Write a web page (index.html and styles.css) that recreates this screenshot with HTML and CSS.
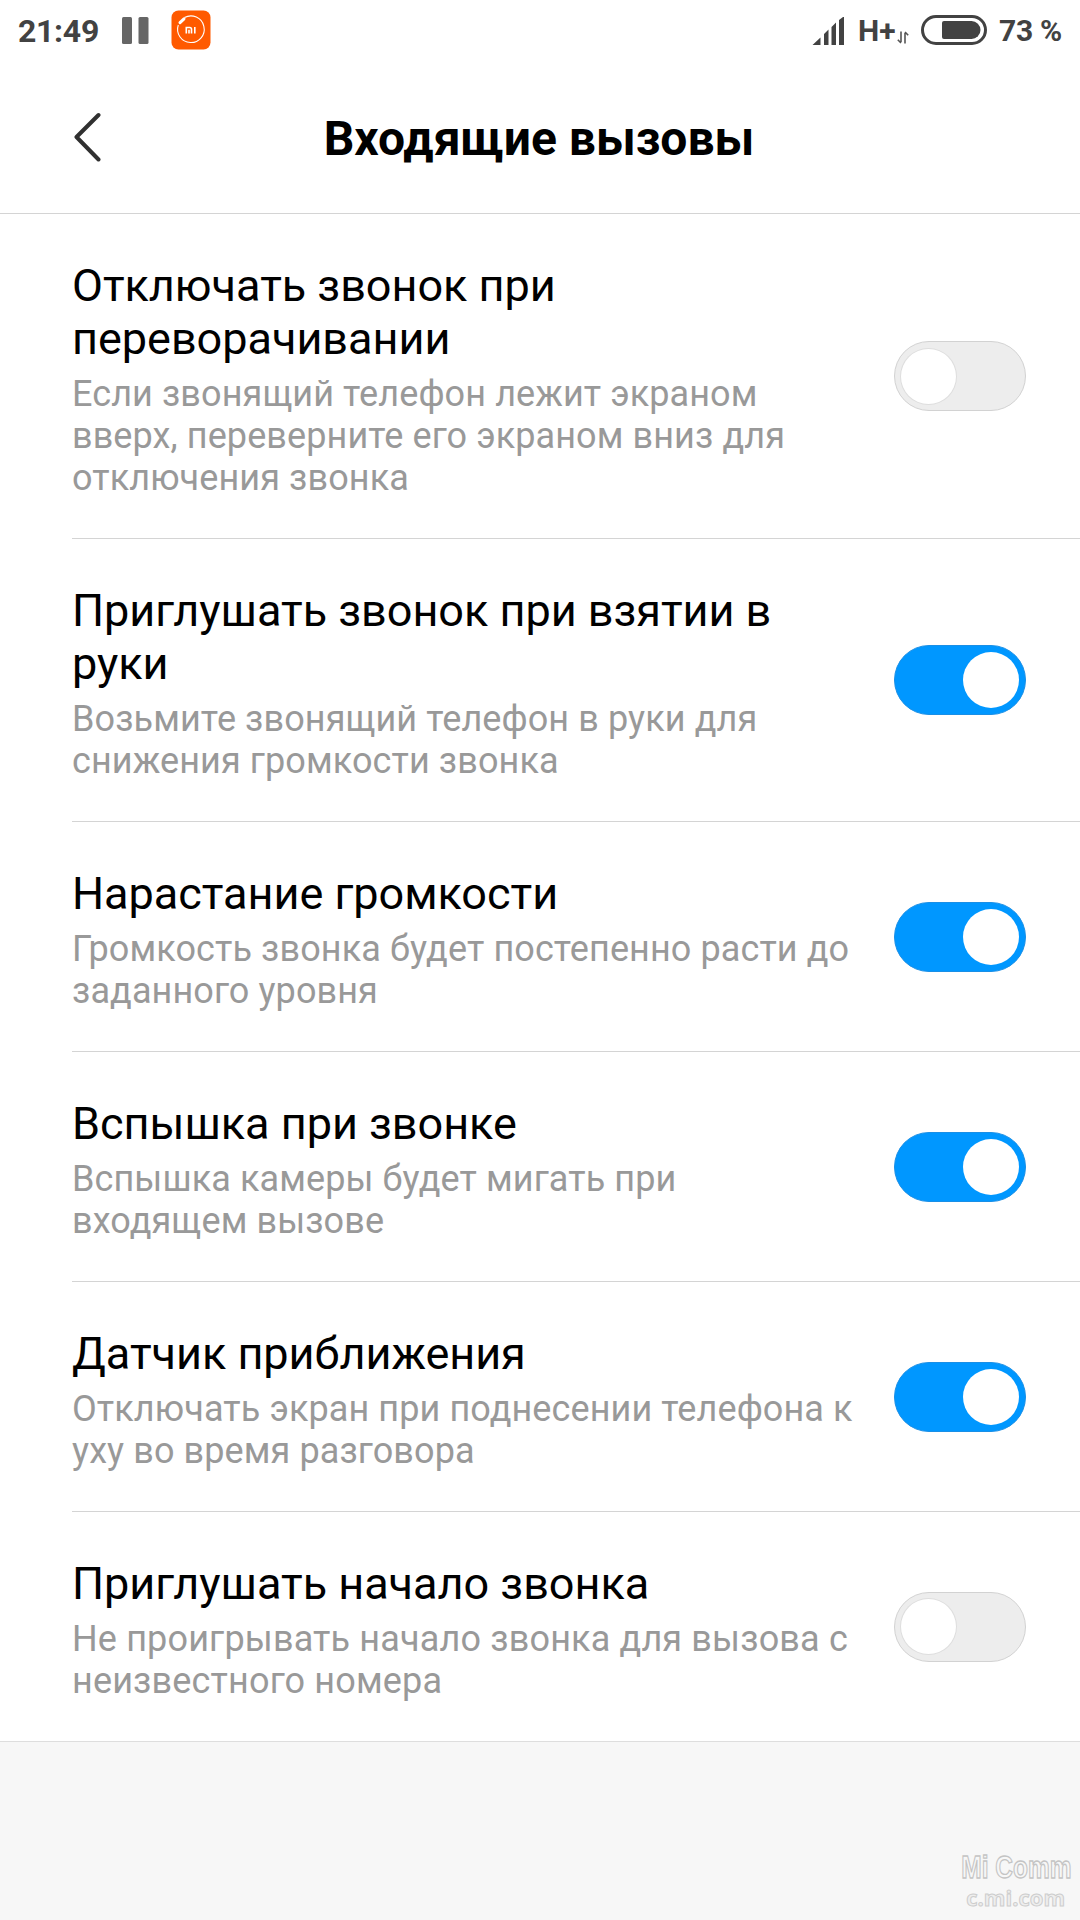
FILE: index.html
```html
<!DOCTYPE html>
<html lang="ru">
<head>
<meta charset="utf-8">
<title>Входящие вызовы</title>
<link rel="stylesheet" href="styles.css">
</head>
<body>
<div class="screen">
  <div class="status">
    <span class="clock">21:49</span>
    <svg class="pause" width="27" height="27" viewBox="0 0 27 27"><rect width="10" height="27" rx="1.5"/><rect x="16.500" width="10" height="27" rx="1.500"/></svg>
    <svg class="app" width="40" height="40" viewBox="0 0 40 40">
      <rect x=".5" y=".5" width="39" height="39" rx="7" fill="#ff5a00"/>
      <path d="M13.500 7.600A13.300 13.300 0 1 1 7.300 15" fill="none" stroke="#fff" stroke-width="1.100"/>
      <path d="M9 12.600l4-3.800" stroke="#fff" stroke-width="3" stroke-linecap="round"/>
      <path d="M15.300 23.500v-6h3.500q1.700 0 1.700 1.700v4.300M18 23.500v-3.800M23.800 17v6.500" fill="none" stroke="#fff" stroke-width="1.600"/>
    </svg>
    <svg class="signal" width="33" height="29" viewBox="0 0 33 29"><path d="M.500 28 8.500 20.500V28zM12 28V17l4.500-4.500V28zM19.500 28V10L24 5.500V28zM27 28V3l4-3h1v28z"/></svg>
    <span class="network">H+</span>
    <svg class="arrows" width="12" height="13" viewBox="0 0 12 13"><path d="M4 .5V11M4 12 .8 8.800M8 12.500V2M8 1l3.200 3.200"/></svg>
    <svg class="battery" width="66" height="30" viewBox="0 0 66 30"><rect x="1.500" y="1.500" width="63" height="27" rx="13.500" fill="none" stroke="#424242" stroke-width="3"/><path d="M23 6H50.500a9 9 0 0 1 0 18H23q-2 0-2-2V8q0-2 2-2z" fill="#424242"/></svg>
    <span class="percent">73 %</span>
  </div>

  <header class="header">
    <svg class="back" width="28" height="50" viewBox="0 0 28 50"><path d="M25.500 3 3.500 25l22 22.500"/></svg>
    <h1 class="heading">Входящие вызовы</h1>
  </header>

  <main class="list">
    <section class="item">
      <div class="copy"><h2 class="title">Отключать звонок при<br>переворачивании</h2><p class="desc">Если звонящий телефон лежит экраном<br>вверх, переверните его экраном вниз для<br>отключения звонка</p></div>
      <span class="toggle"><span class="knob"></span></span>
    </section>
    <section class="item">
      <div class="copy"><h2 class="title">Приглушать звонок при взятии в<br>руки</h2><p class="desc">Возьмите звонящий телефон в руки для<br>снижения громкости звонка</p></div>
      <span class="toggle on"><span class="knob"></span></span>
    </section>
    <section class="item">
      <div class="copy"><h2 class="title">Нарастание громкости</h2><p class="desc">Громкость звонка будет постепенно расти до<br>заданного уровня</p></div>
      <span class="toggle on"><span class="knob"></span></span>
    </section>
    <section class="item">
      <div class="copy"><h2 class="title">Вспышка при звонке</h2><p class="desc">Вспышка камеры будет мигать при<br>входящем вызове</p></div>
      <span class="toggle on"><span class="knob"></span></span>
    </section>
    <section class="item">
      <div class="copy"><h2 class="title">Датчик приближения</h2><p class="desc">Отключать экран при поднесении телефона к<br>уху во время разговора</p></div>
      <span class="toggle on"><span class="knob"></span></span>
    </section>
    <section class="item">
      <div class="copy"><h2 class="title">Приглушать начало звонка</h2><p class="desc">Не проигрывать начало звонка для вызова с<br>неизвестного номера</p></div>
      <span class="toggle"><span class="knob"></span></span>
    </section>
  </main>

  <footer class="footer">
    <span class="mark-name">Mi Comm</span>
    <span class="mark-site">c.mi.com</span>
  </footer>
</div>
</body>
</html>
```
FILE: styles.css
```css
* { box-sizing: border-box; }
body { margin: 0; background: #fff; font-family: Roboto, sans-serif; }
h1, h2, p { margin: 0; font-weight: 400; }
svg { display: block; flex: none; }

.screen { width: 1080px; height: 1920px; display: flex; flex-direction: column; overflow: hidden; }

.status { height: 60px; display: flex; align-items: center; padding: 0 18px; color: #424242; font-weight: 700; white-space: nowrap; }
.clock { width: 104px; font-size: 32px; line-height: 38px; padding-top: 1px; letter-spacing: -0.3px; }
.pause { fill: #666; }
.app { margin-left: 22px; }
.signal { margin: 2px 13px 0 auto; fill: #424242; }
.network { width: 39px; font-size: 30px; line-height: 36px; padding-top: 1px; }
.arrows { margin-top: 15px; fill: none; stroke: #555; stroke-width: 1.6; }
.battery { margin-left: 12px; }
.percent { width: 63px; margin-left: 12px; font-size: 30px; line-height: 36px; padding-top: 1px; letter-spacing: -0.3px; }

.header { height: 154px; display: grid; grid-template-columns: 28px 1fr 28px; align-items: center; padding: 4px 75px 0 73px; border-bottom: 1px solid #d4d4d4; }
.back { margin-bottom: 4px; fill: none; stroke: #303030; stroke-width: 4; stroke-linecap: round; stroke-linejoin: round; }
.heading { font-size: 48px; line-height: 56px; font-weight: 700; text-align: center; color: #000; }

.item { display: flex; align-items: center; justify-content: space-between; margin-left: 72px; padding-right: 54px; border-bottom: 1px solid #d4d4d4; }
.item:last-child { margin-left: 0; padding-left: 72px; border-color: #dedede; }
.item:last-child .desc { letter-spacing: 0.16px; }
.copy { padding: 45px 0 39px; white-space: nowrap; }
.title { font-size: 45px; line-height: 53px; color: #000; letter-spacing: -0.02px; }
.desc { margin-top: 8px; font-size: 36px; line-height: 42px; color: #999; letter-spacing: 0.1px; }

.toggle { flex: none; display: flex; align-items: center; width: 132px; height: 70px; padding: 0 6px; border: 1px solid #d2d2d2; border-radius: 35px; background: #ededed; }
.knob { width: 55px; height: 55px; border-radius: 50%; background: #fff; box-shadow: 0 0 0 1px #dedede; }
.toggle.on { justify-content: flex-end; border-color: #1a8fe6; background: #0097ff; }
.toggle.on .knob { width: 56px; height: 56px; box-shadow: none; }

.footer { flex: 1; display: flex; flex-direction: column; align-items: flex-end; justify-content: flex-end; padding: 0 9px 9px 0; background: #f7f7f7; }
.mark-name { font: 700 31px/30px "Liberation Sans", sans-serif; color: #f7f7f7; -webkit-text-stroke: 1.3px #c4c4c4; transform: scaleX(0.79); transform-origin: right center; }
.mark-site { margin-right: 6px; font: 700 22px/28px "Open Sans", sans-serif; color: #eee; -webkit-text-stroke: 1px #cdcdcd; }
```
